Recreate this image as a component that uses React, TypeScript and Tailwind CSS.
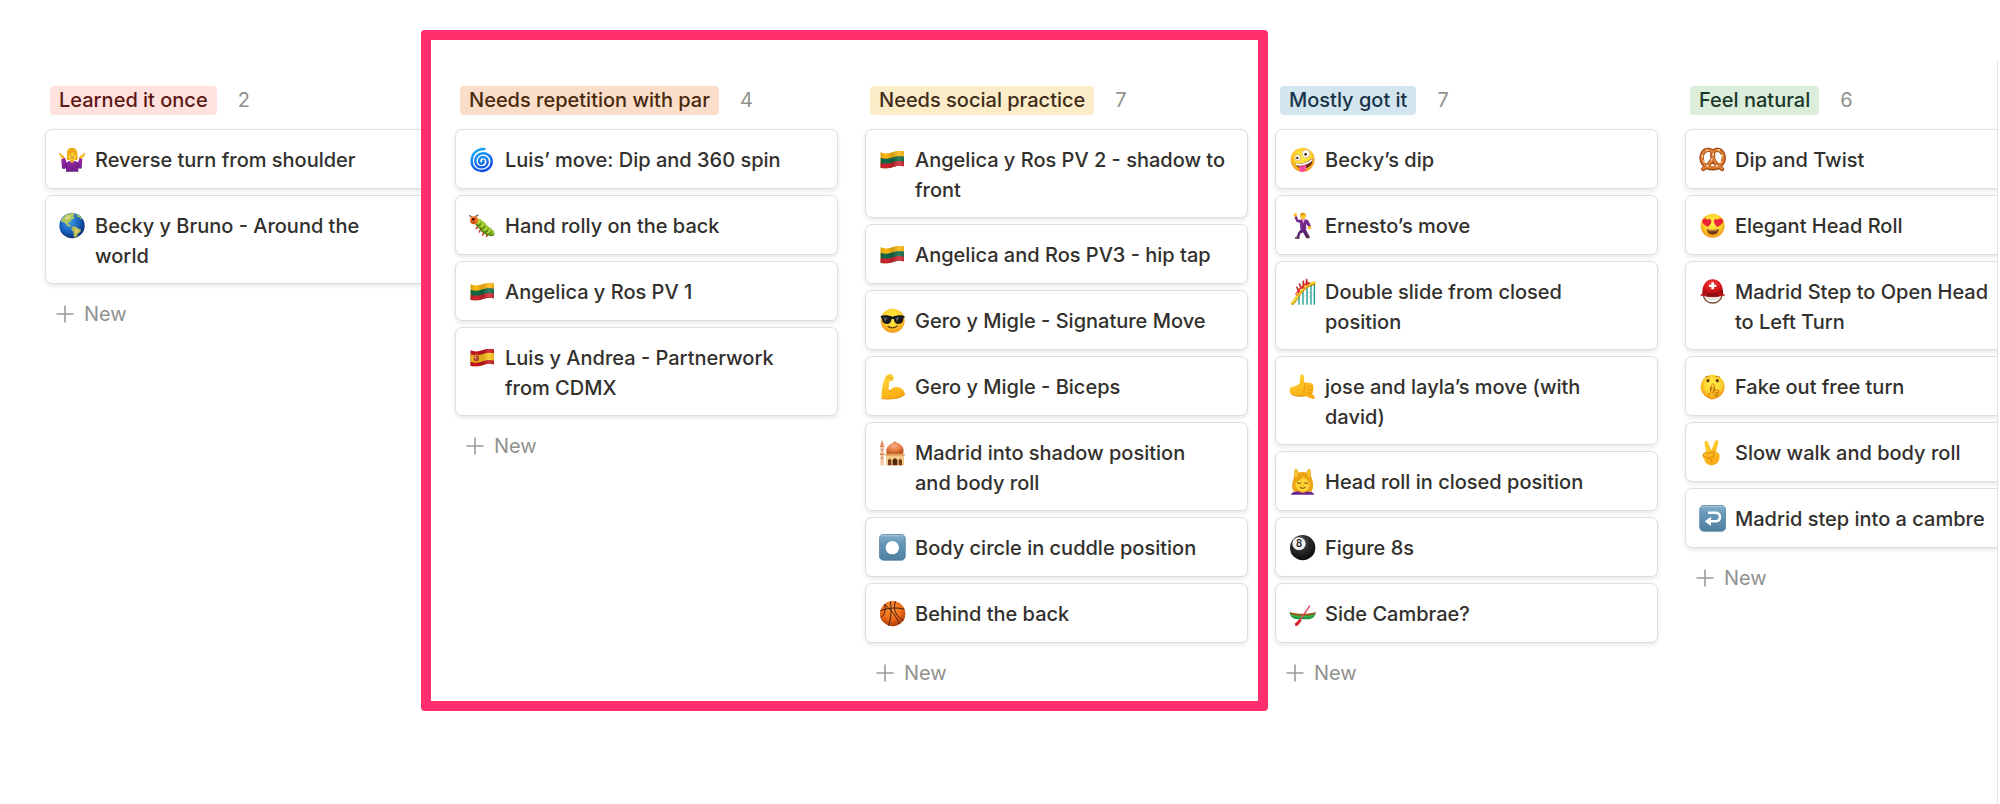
import type { ReactNode } from "react";

type IconName =
  | "shrug" | "globe" | "cyclone" | "bug" | "lithuania" | "spain" | "cool" | "biceps" | "mosque"
  | "record" | "basketball" | "zany" | "dancer" | "coaster" | "callme" | "massage" | "eightball"
  | "canoe" | "pretzel" | "hearts" | "helmet" | "shush" | "victory" | "return";

const FLAG_TOP = "M4 19C16 24 30 23 42 18C54 14 65 13 75 16";
const FLAG_BODY = FLAG_TOP + "V61C65 58 54 59 42 63C30 68 16 68 4 65Z";

function GradientDefs() {
  return (
    <svg width="0" height="0" className="absolute" aria-hidden="true">
      <defs>
        <radialGradient id="g-face" cx="0.5" cy="0.4" r="0.6">
          <stop offset="0" stopColor="#fff04a" />
          <stop offset="0.6" stopColor="#fdd42f" />
          <stop offset="1" stopColor="#f2921a" />
        </radialGradient>
        <linearGradient id="g-skin" x1="0" y1="0" x2="0.4" y2="1">
          <stop offset="0" stopColor="#ffd93a" />
          <stop offset="1" stopColor="#fbac14" />
        </linearGradient>
        <linearGradient id="g-purple" x1="0" y1="0" x2="0" y2="1">
          <stop offset="0" stopColor="#9b2aa8" />
          <stop offset="1" stopColor="#6b1c86" />
        </linearGradient>
        <radialGradient id="g-sea" cx="0.4" cy="0.35" r="0.65">
          <stop offset="0" stopColor="#3d9be8" />
          <stop offset="0.6" stopColor="#1861bd" />
          <stop offset="1" stopColor="#0b3173" />
        </radialGradient>
        <linearGradient id="g-swirl" x1="0" y1="0" x2="0.4" y2="1">
          <stop offset="0" stopColor="#15b5f2" />
          <stop offset="0.5" stopColor="#1786f5" />
          <stop offset="1" stopColor="#1250e8" />
        </linearGradient>
        <linearGradient id="g-button" x1="0" y1="0" x2="0" y2="1">
          <stop offset="0" stopColor="#86b1cd" />
          <stop offset="0.35" stopColor="#6597b9" />
          <stop offset="1" stopColor="#4f7f9f" />
        </linearGradient>
        <radialGradient id="g-ball" cx="0.45" cy="0.3" r="0.7">
          <stop offset="0" stopColor="#ff9a3c" />
          <stop offset="0.6" stopColor="#ec6a17" />
          <stop offset="1" stopColor="#a93c06" />
        </radialGradient>
        <radialGradient id="g-black" cx="0.4" cy="0.3" r="0.7">
          <stop offset="0" stopColor="#6a6a6a" />
          <stop offset="0.5" stopColor="#2c2c2c" />
          <stop offset="1" stopColor="#0c0c0c" />
        </radialGradient>
        <radialGradient id="g-dome" cx="0.45" cy="0.3" r="0.7">
          <stop offset="0" stopColor="#f9b184" />
          <stop offset="0.6" stopColor="#e5793f" />
          <stop offset="1" stopColor="#b24c1d" />
        </radialGradient>
        <radialGradient id="g-red" cx="0.45" cy="0.3" r="0.8">
          <stop offset="0" stopColor="#f43b3b" />
          <stop offset="0.6" stopColor="#d01418" />
          <stop offset="1" stopColor="#8a090c" />
        </radialGradient>
        <radialGradient id="g-bug" cx="0.5" cy="0.35" r="0.6">
          <stop offset="0" stopColor="#d2ee4e" />
          <stop offset="0.65" stopColor="#8fbf22" />
          <stop offset="1" stopColor="#3f6d0d" />
        </radialGradient>
        <linearGradient id="g-fold" x1="0" y1="0" x2="1" y2="0">
          <stop offset="0" stopColor="#000" stopOpacity="0.18" />
          <stop offset="0.25" stopColor="#000" stopOpacity="0" />
          <stop offset="0.5" stopColor="#000" stopOpacity="0.16" />
          <stop offset="0.75" stopColor="#fff" stopOpacity="0.14" />
          <stop offset="1" stopColor="#000" stopOpacity="0.14" />
        </linearGradient>
        <clipPath id="c-flag">
          <path d={FLAG_BODY} />
        </clipPath>
      </defs>
    </svg>
  );
}

function Flag({ top, middle, bottom, wide }: { top: string; middle: string; bottom: string; wide?: boolean }) {
  const band = "C16 24 30 23 42 18C54 14 65 13 75 16";
  return (
    <g clipPath="url(#c-flag)">
      <rect width="81" height="81" fill={top} />
      <g transform={wide ? "translate(0 12)" : "translate(0 16)"}>
        <path d={"M4 19" + band + "V81H4Z"} fill={middle} />
      </g>
      <g transform={wide ? "translate(0 34)" : "translate(0 31)"}>
        <path d={"M4 19" + band + "V81H4Z"} fill={bottom} />
      </g>
      <rect width="81" height="81" fill="url(#g-fold)" />
    </g>
  );
}

const face = <circle cx="41" cy="41" r="36" fill="url(#g-face)" />;

const drawings: Record<IconName, ReactNode> = {
  shrug: (
    <>
      <path d="M24 29C22 8 32 5 40 6C51 6 56 14 55 28C56 36 58 38 54 42H25C21 38 24 36 24 29Z" fill="#eda912" />
      <path d="M2 24C0 20 4 22 6 26L16 34L15 40C10 37 4 30 2 24ZM77 24C80 20 76 21 73 26L62 33L63 39C69 37 75 31 77 24Z" fill="#fdc526" stroke="#f2a913" strokeWidth="3" />
      <path d="M33 38H45V49H33Z" fill="#f3a91b" />
      <ellipse cx="40" cy="29" rx="11" ry="13" fill="#ffd535" />
      <path d="M27 28C29 15 40 14 44 14C52 16 53 23 53 28C47 24 43 21 41 18C38 24 33 25 27 28Z" fill="#f0a817" />
      <path d="M34 28H37M43 28H46M36 36Q40 33 44 36" stroke="#7b4307" strokeWidth="2.4" fill="none" />
      <path d="M7 39L18 36L23 50L30 44C36 51 43 51 48 44L57 49L62 36L70 39L68 67C65 69 60 69 58 65V77H21V65C18 70 13 70 9 67Z" fill="url(#g-purple)" />
      <path d="M22 50V65M57 50V65" stroke="#571069" strokeWidth="2" />
    </>
  ),
  globe: (
    <>
      <circle cx="39" cy="41" r="38" fill="url(#g-sea)" />
      <path d="M12 17C21 6 34 3 42 4L48 8L41 13L48 17L42 22L34 24L37 29L30 29L27 36L34 39L36 44L26 42L17 32L10 29L6 30C6 25 9 20 12 17Z" fill="#b4ca5e" />
      <path d="M20 15L31 11L34 16L26 22L19 21Z" fill="#e0d98a" />
      <path d="M51 6C61 9 68 17 70 22L64 21L60 16L53 14Z" fill="#93bb5a" />
      <path d="M38 45L48 43L57 49L66 53L64 60L57 65L54 72L47 77L44 72L43 60L37 52Z" fill="#b3bd50" />
      <path d="M48 49L58 53L55 62L49 66Z" fill="#dcc975" />
    </>
  ),
  cyclone: (
    <path
      d="M46 9C22 8 8 25 8 46C8 64 22 75 38 75C56 75 68 62 68 47C68 31 56 22 42 22C28 22 19 33 19 46C19 57 28 64 38 64C49 64 56 56 56 47C56 38 49 33 41 33C34 33 30 39 30 45C30 51 34 54 39 53C43 52 45 48 43 44"
      fill="none" stroke="url(#g-swirl)" strokeWidth="7.5" strokeLinecap="round"
    />
  ),
  bug: (
    <>
      <path d="M9 17Q7 10 1 11M20 16Q20 8 27 9" fill="none" stroke="#3b3029" strokeWidth="3" strokeLinecap="round" />
      <path d="M26 43L22 50M35 52L31 60M44 62L41 69M56 68L53 73" stroke="#c5451c" strokeWidth="5" strokeLinecap="round" />
      <ellipse cx="67" cy="63" rx="9" ry="10" fill="url(#g-bug)" />
      <circle cx="57" cy="58" r="12" fill="url(#g-bug)" />
      <circle cx="47" cy="50" r="12" fill="url(#g-bug)" />
      <circle cx="38" cy="40" r="12" fill="url(#g-bug)" />
      <circle cx="28" cy="31" r="11" fill="url(#g-bug)" />
      <circle cx="15" cy="25" r="12" fill="#ee6a1d" />
      <circle cx="13" cy="22" r="4" fill="#2b1507" />
      <path d="M6 30Q12 35 19 31" stroke="#8e2d08" strokeWidth="2.5" fill="none" />
    </>
  ),
  lithuania: <Flag top="#fdb913" middle="#126b46" bottom="#cf2530" />,
  spain: (
    <>
      <Flag top="#c8151f" middle="#fcc418" bottom="#c8151f" wide />
      <path d="M14 35H30V49Q22 56 14 49Z" fill="#b4442b" />
      <path d="M17 37H22V43H17Z" fill="#e9b6a0" />
      <path d="M18 29H26V34H18Z" fill="#a5672a" />
    </>
  ),
  cool: (
    <>
      {face}
      <path d="M5 27C18 23 30 26 41 29C52 26 64 23 77 27L76 32L73 34C73 46 67 51 58 51C50 51 46 46 44 36H38C36 46 32 51 24 51C15 51 9 46 9 34L6 32Z" fill="#17181c" />
      <path d="M14 31L26 33L18 44ZM50 33L62 31L54 44Z" fill="#59616b" />
      <path d="M27 58Q41 68 55 57" stroke="#6f3b08" strokeWidth="4" fill="none" strokeLinecap="round" />
    </>
  ),
  biceps: (
    <>
      <path d="M21 9C27 2 37 1 42 8C46 14 44 20 39 23C34 25 31 24 30 28L29 51C34 53 38 43 50 42C64 41 76 51 78 63C68 77 42 80 8 77C6 56 12 28 18 15Z" fill="url(#g-skin)" />
      <path d="M23 15Q29 11 34 14Q38 16 39 22M29 51Q34 54 38 57M8 77C35 80 67 77 78 63" stroke="#e08f0b" strokeWidth="2.5" fill="none" />
    </>
  ),
  mosque: (
    <>
      <path d="M4 20L9 2L15 20Z" fill="#e58355" />
      <path d="M3 20H16V25H3ZM3 43H16V48H3Z" fill="#e07f50" />
      <path d="M4 25H15V43H4ZM4 48H15V79H4Z" fill="#f5cbb0" />
      <path d="M7 29H11V35H7ZM7 53H11V60H7Z" fill="#bb7350" />
      <path d="M47 4L50 12H45Z" fill="#b85e24" />
      <path d="M24 46C15 26 36 11 48 10C61 11 81 26 71 46Z" fill="url(#g-dome)" />
      <path d="M21 45H75V79H21Z" fill="#f2c988" />
      <path d="M19 44H77V50H19Z" fill="#e39d5b" />
      <path d="M27 79V64Q32 54 37 64V79ZM59 79V64Q64 54 69 64V79Z" fill="#7a3b17" />
      <path d="M41 79V64Q48 52 55 64V79Z" fill="#50240c" />
    </>
  ),
  record: (
    <>
      <rect x="1" y="1" width="78" height="78" rx="13" fill="url(#g-button)" stroke="#4c7998" strokeWidth="2" />
      <path d="M8 5H72" stroke="#b4d2e4" strokeWidth="2" strokeLinecap="round" />
      <circle cx="40" cy="41" r="20" fill="#fff" />
    </>
  ),
  basketball: (
    <>
      <circle cx="41" cy="41" r="38" fill="url(#g-ball)" />
      <path d="M16 13C36 28 54 52 61 72M34 4C37 20 38 55 28 77M50 4C40 24 50 50 73 61M4 33C20 25 53 20 76 28M5 52C18 46 21 30 17 12" fill="none" stroke="#431b0a" strokeWidth="3" />
    </>
  ),
  zany: (
    <>
      {face}
      <circle cx="26" cy="35" r="9" fill="#fff" stroke="#cc8b2e" strokeWidth="1.5" />
      <circle cx="51" cy="23" r="12" fill="#fff" stroke="#cc8b2e" strokeWidth="1.5" />
      <circle cx="25" cy="36" r="3.5" fill="#3c1e0b" />
      <circle cx="50" cy="25" r="4" fill="#3c1e0b" />
      <path d="M18 52C37 56 55 50 70 37C74 54 61 68 42 68C31 68 22 62 18 52Z" fill="#6a2d0b" />
      <path d="M19 52C37 56 55 50 70 38L70 44C56 57 36 61 22 58Z" fill="#fff" />
      <path d="M31 61C38 58 45 57 51 55V70C51 80 31 81 31 71Z" fill="#f8509a" />
      <path d="M41 61V71" stroke="#c32a6b" strokeWidth="2" />
    </>
  ),
  dancer: (
    <>
      <path d="M37 51L49 50L61 72L57 78L50 76L42 61L34 65L30 77L22 76L29 59Z" fill="#5c2470" />
      <path d="M18 76H32V80H18ZM50 75L62 73V79H53Z" fill="#4b2e25" />
      <path d="M16 14L23 12L28 24L43 21L57 24L66 42L60 46L51 36L52 52H34L33 33L22 29Z" fill="#762b8c" />
      <path d="M38 21L43 35L48 21Z" fill="#e8a9d8" />
      <circle cx="19" cy="9" r="5" fill="#fdb819" />
      <circle cx="62" cy="47" r="5" fill="#fdb819" />
      <ellipse cx="42" cy="12" rx="8" ry="10" fill="#fdc525" />
      <path d="M33 11Q34 1 43 2Q52 4 50 12L46 8Z" fill="#d8920b" />
    </>
  ),
  coaster: (
    <>
      <path d="M30 55V80M42 40V80M54 28V80M66 20V80M76 16V80" stroke="#1d9c91" strokeWidth="4" />
      <path d="M42 58L54 48L66 38M54 63L76 45" stroke="#71b9ae" strokeWidth="1.5" />
      <path d="M7 78C25 70 30 24 79 15" fill="none" stroke="#c88d0b" strokeWidth="10" />
      <path d="M7 76C25 68 30 22 79 13" fill="none" stroke="#f8db3d" strokeWidth="6" />
      <path d="M18 49L28 34L42 20L57 10L64 16L51 25L36 37L25 53Z" fill="#dd352d" />
      <path d="M27 35L24 28M34 26L32 18M43 19L43 10M52 13L53 5" stroke="#bc2a25" strokeWidth="5" strokeLinecap="round" />
      <path d="M23 50L26 44M33 38L38 33M46 26L51 22" stroke="#ffe15c" strokeWidth="4" />
    </>
  ),
  callme: (
    <>
      <path d="M32 31C34 21 31 11 35 5C39 1 44 5 45 12L46 29C52 29 58 27 64 30C72 31 74 36 71 40C76 43 75 48 71 50C74 54 73 60 68 61L77 71C80 77 74 79 69 77L50 69C35 71 18 71 6 63C0 55 1 45 7 42C18 40 25 38 32 31Z" fill="url(#g-skin)" />
      <path d="M71 39C64 41 60 40 56 38M71 50C64 52 59 51 55 48M68 61C62 62 57 60 53 57M49 29Q44 39 48 47Q43 52 45 60M6 63C18 71 35 71 50 69" fill="none" stroke="#dc8d0b" strokeWidth="2.5" />
    </>
  ),
  massage: (
    <>
      <path d="M5 80C11 69 26 68 41 68C56 68 71 69 76 80Z" fill="#72248d" />
      <path d="M14 70C4 61 12 25 23 15C35 11 48 11 59 16C72 28 77 60 67 71Z" fill="#eba516" />
      <path d="M17 26C16 17 16 8 20 3L26 8L28 24L20 34ZM64 26C65 17 66 8 61 3L55 8L54 24L62 34Z" fill="#fdc72c" stroke="#db920d" strokeWidth="2" />
      <path d="M32 61H50V72Q41 77 32 72Z" fill="#f4ad1b" />
      <ellipse cx="41" cy="46" rx="22" ry="25" fill="#ffd335" />
      <path d="M18 47C18 23 40 19 47 20C61 23 65 32 64 46C57 36 48 32 43 26C37 36 27 37 18 47Z" fill="#eaa217" />
      <path d="M26 45Q31 49 35 45M47 45Q52 49 57 45M34 59Q41 64 48 59" stroke="#6f3a08" strokeWidth="3" fill="none" strokeLinecap="round" />
      <path d="M38 51Q41 54 44 51" stroke="#d58a12" strokeWidth="2" fill="none" />
    </>
  ),
  eightball: (
    <>
      <circle cx="41" cy="41" r="38" fill="url(#g-black)" />
      <ellipse cx="30" cy="29" rx="20" ry="19" fill="#f3f3f3" />
      <text x="30" y="39" textAnchor="middle" fontFamily="Inter, sans-serif" fontWeight="600" fontSize="29" fill="#202020">8</text>
    </>
  ),
  canoe: (
    <>
      <path d="M2 37C15 46 66 46 80 37C80 51 69 58 55 58H25C12 57 3 50 2 37Z" fill="#1f9844" />
      <path d="M2 36C20 43 62 43 80 36L77 43C62 49 20 49 5 43Z" fill="#9b551d" />
      <path d="M5 45C20 51 62 51 77 45" fill="none" stroke="#46c35a" strokeWidth="2.5" />
      <path d="M62 18L32 62" stroke="#e0475a" strokeWidth="4" strokeLinecap="round" />
      <path d="M32 57L38 62L27 76C22 81 15 78 19 70Z" fill="#d71f2c" />
    </>
  ),
  pretzel: (
    <>
      <path d="M13 69C25 61 42 49 43 29C43 8 18 6 10 24C2 44 17 67 41 67C65 67 80 44 72 24C64 6 39 8 40 29C41 49 57 61 69 69" fill="none" stroke="#a94b14" strokeWidth="13" strokeLinecap="round" />
      <path d="M13 68C25 60 42 48 43 28C43 9 19 7 11 24C3 43 18 65 41 65C64 65 79 43 71 24C63 7 40 9 41 28C41 48 57 60 69 68" fill="none" stroke="#dc8038" strokeWidth="7" strokeLinecap="round" />
      <path d="M10 28V32M14 45L17 48M24 59L27 60M43 23V28M39 39L37 42M69 27V31M66 46L64 49M55 59L52 60M22 13H26M57 12H61" stroke="#ffe6c0" strokeWidth="4" strokeLinecap="round" />
    </>
  ),
  hearts: (
    <>
      {face}
      <path d="M26 45C14 38 7 31 11 24C15 18 22 19 25 24C30 18 38 22 37 30C36 36 31 41 26 45ZM56 45C51 41 46 36 45 30C44 22 52 18 57 24C60 19 68 18 71 24C75 31 68 38 56 45Z" fill="#ec2337" />
      <path d="M23 51C35 55 47 55 60 51C58 63 51 68 41 68C31 68 25 63 23 51Z" fill="#743711" />
      <path d="M24 51C36 55 48 55 59 51L57 56Q41 60 26 56Z" fill="#b97b3c" />
    </>
  ),
  helmet: (
    <>
      <path d="M13 52C15 66 28 75 41 75C54 75 67 66 69 52" fill="none" stroke="#7d4b38" strokeWidth="4" />
      <path d="M19 54C23 64 31 67 41 67C51 67 59 64 63 54Z" fill="#e8e0dd" />
      <path d="M10 48C8 22 22 4 41 4C60 4 74 22 72 48Z" fill="url(#g-red)" />
      <path d="M3 51C10 45 18 48 28 43H54C64 48 72 45 79 51C69 58 13 58 3 51Z" fill="#bb1519" />
      <path d="M28 44C37 47 46 47 54 44L63 54C48 58 34 58 19 54Z" fill="#8f0d11" />
      <path d="M37 13H45V20H52V27H45V34H37V27H30V20H37Z" fill="#fff" />
    </>
  ),
  shush: (
    <>
      {face}
      <ellipse cx="27" cy="23" rx="4.5" ry="5" fill="#653208" />
      <ellipse cx="55" cy="23" rx="4.5" ry="5" fill="#653208" />
      <path d="M18 12Q25 8 32 13M49 12Q56 8 63 13" stroke="#b76d12" strokeWidth="2.5" fill="none" />
      <circle cx="41" cy="48" r="8" fill="#9a5211" />
      <path d="M38 35C41 30 46 32 46 37L44 54L57 51C62 52 61 58 58 59C61 62 59 66 55 67C53 75 43 80 34 77C28 75 28 68 30 64L36 54Z" fill="url(#g-skin)" stroke="#d57a0a" strokeWidth="2.5" />
      <path d="M44 54L39 62M57 59L48 61M55 67L46 67" stroke="#a5560d" strokeWidth="2.5" />
    </>
  ),
  victory: (
    <>
      <path d="M14 44L22 38C21 27 15 13 19 7C24 3 28 8 30 14L38 34L49 7C52 0 61 2 59 10L52 38C62 42 64 48 62 58C61 72 50 79 37 79C25 78 18 70 17 61C11 56 10 49 14 44Z" fill="url(#g-skin)" transform="translate(-1 0)" />
      <path d="M14 44C19 39 25 41 27 46C30 40 39 39 43 43L45 52C38 56 32 53 26 57L20 53C15 55 11 50 14 44ZM26 57C34 58 39 62 38 71M29 40L32 42M48 37L42 40" fill="none" stroke="#d58308" strokeWidth="2.8" />
    </>
  ),
  return: (
    <>
      <rect x="2" y="1" width="78" height="78" rx="13" fill="url(#g-button)" stroke="#4c7998" strokeWidth="2" />
      <path d="M9 5H73" stroke="#b4d2e4" strokeWidth="2" strokeLinecap="round" />
      <path d="M27 23H48C60 23 63 30 63 36C63 43 58 49 48 49H32" fill="none" stroke="#fff" strokeWidth="7.5" />
      <path d="M17 49L36 35V63Z" fill="#fff" />
    </>
  ),
};

function Icon({ name }: { name: IconName }) {
  return (
    <svg viewBox="0 0 81 81" className="mt-px size-[27px] shrink-0" aria-hidden="true">
      {drawings[name]}
    </svg>
  );
}

type Card = { icon: IconName; title: string };
type Column = { name: string; pill: string; cards: Card[] };

const columns: Column[] = [
  {
    name: "Learned it once",
    pill: "bg-[#ffe2dd] text-[#5d1715]",
    cards: [
      { icon: "shrug", title: "Reverse turn from shoulder" },
      { icon: "globe", title: "Becky y Bruno - Around the world" },
    ],
  },
  {
    name: "Needs repetition with par",
    pill: "bg-[#fadec9] text-[#49290e]",
    cards: [
      { icon: "cyclone", title: "Luis’ move: Dip and 360 spin" },
      { icon: "bug", title: "Hand rolly on the back" },
      { icon: "lithuania", title: "Angelica y Ros PV 1" },
      { icon: "spain", title: "Luis y Andrea - Partnerwork from\u00a0CDMX" },
    ],
  },
  {
    name: "Needs social practice",
    pill: "bg-[#fdecc8] text-[#402c1b]",
    cards: [
      { icon: "lithuania", title: "Angelica y Ros PV 2 - shadow to front" },
      { icon: "lithuania", title: "Angelica and Ros PV3 - hip tap" },
      { icon: "cool", title: "Gero y Migle - Signature Move" },
      { icon: "biceps", title: "Gero y Migle - Biceps" },
      { icon: "mosque", title: "Madrid into shadow position and\u00a0body\u00a0roll" },
      { icon: "record", title: "Body circle in cuddle position" },
      { icon: "basketball", title: "Behind the back" },
    ],
  },
  {
    name: "Mostly got it",
    pill: "bg-[#d3e5ef] text-[#183347]",
    cards: [
      { icon: "zany", title: "Becky’s dip" },
      { icon: "dancer", title: "Ernesto’s move" },
      { icon: "coaster", title: "Double slide from closed position" },
      { icon: "callme", title: "jose and layla’s move (with david)" },
      { icon: "massage", title: "Head roll in closed position" },
      { icon: "eightball", title: "Figure 8s" },
      { icon: "canoe", title: "Side Cambrae?" },
    ],
  },
  {
    name: "Feel natural",
    pill: "bg-[#dbeddb] text-[#1c3829]",
    cards: [
      { icon: "pretzel", title: "Dip and Twist" },
      { icon: "hearts", title: "Elegant Head Roll" },
      { icon: "helmet", title: "Madrid Step to Open Head to\u00a0Left\u00a0Turn" },
      { icon: "shush", title: "Fake out free turn" },
      { icon: "victory", title: "Slow walk and body roll" },
      { icon: "return", title: "Madrid step into a cambre" },
    ],
  },
];

function BoardColumn({ name, pill, cards }: Column) {
  return (
    <section className="w-[383px] shrink-0">
      <header className="flex items-center gap-[21px] pl-[5px]">
        <h2 className={"rounded-[4px] px-[9px] text-xl leading-[29px] font-medium " + pill}>{name}</h2>
        <span className="text-xl leading-[29px] text-[#91918e]">{cards.length}</span>
      </header>
      <ul className="mt-[14px] flex flex-col gap-[6px]">
        {cards.map((card) => (
          <li key={card.title}>
            <a
              href="#"
              className="flex min-h-[60px] items-start gap-[9px] rounded-[7px] border border-[#dededd] bg-white pt-[15px] pr-[19px] pb-3 pl-[13px] text-xl leading-[30px] font-medium text-[#32302c] shadow-[0_2px_4px_rgba(15,15,15,0.1)]"
            >
              <Icon name={card.icon} />
              <span>{card.title}</span>
            </a>
          </li>
        ))}
      </ul>
      <button type="button" className="mt-[6px] flex h-12 items-center gap-[10px] pl-[11px] text-xl text-[#91918e]">
        <svg viewBox="0 0 18 18" className="size-[18px]" aria-hidden="true">
          <path d="M9 0.5V17.5M0.5 9H17.5" stroke="#9b9a97" strokeWidth="1.6" />
        </svg>
        New
      </button>
    </section>
  );
}

export default function App() {
  const [first, second, third, ...rest] = columns;
  return (
    <main className="flex min-h-screen bg-white pt-[61px] pr-[2px] font-['Inter','Liberation_Sans',sans-serif]">
      <GradientDefs />
      <div className="flex min-w-0 flex-1 items-start gap-[27px] overflow-x-clip border-r border-[#e3e3e2] pt-[25px] pl-[45px]">
        <BoardColumn {...first} />
        <div className="relative flex shrink-0 items-start gap-[27px]">
          <BoardColumn {...second} />
          <BoardColumn {...third} />
          <div className="pointer-events-none absolute -top-14 -right-5 -bottom-[14px] -left-[34px] rounded-[4px] border-10 border-[#ff2e6c]" />
        </div>
        {rest.map((column) => (
          <BoardColumn key={column.name} {...column} />
        ))}
      </div>
    </main>
  );
}
